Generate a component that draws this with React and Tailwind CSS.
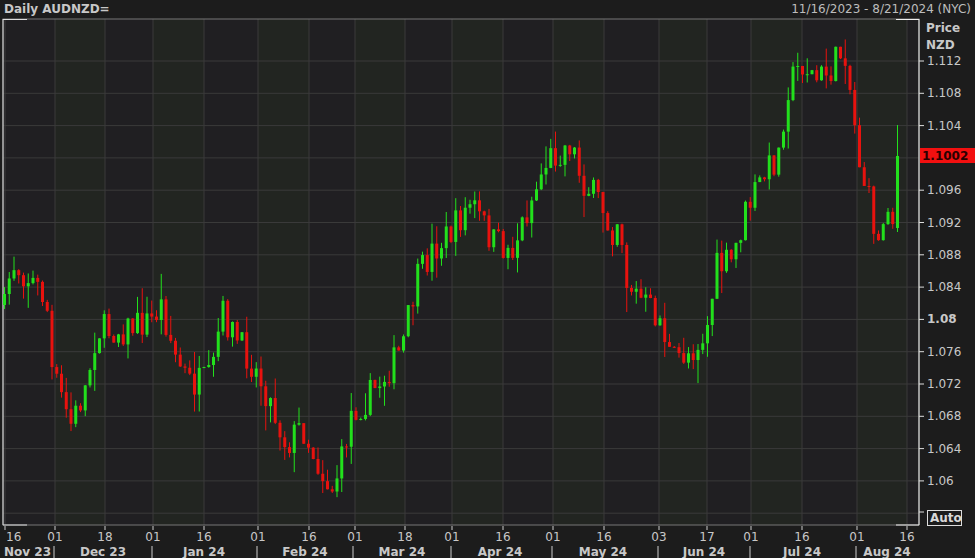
import React from 'react';

const Y = (p) => 61 + ((1.112 - p) / 0.004) * 32.3;

const path = [[3,310],[10,262],[30,280],[45,300],[50,370],[70,425],[85,385],[95,330],[120,330],[150,320],[160,305],[175,360],[190,385],[210,380],[220,312],[235,340],[250,362],[265,392],[285,445],[300,425],[320,472],[330,490],[340,462],[350,412],[365,400],[380,380],[400,350],[415,282],[430,252],[450,232],[470,202],[490,240],[510,252],[530,200],[545,160],[560,150],[570,142],[580,180],[600,205],[610,232],[618,212],[625,282],[640,300],[660,322],[670,362],[690,350],[705,332],[715,268],[730,262],[745,210],[760,180],[778,152],[785,90],[800,62],[815,80],[830,70],[843,45],[850,100],[858,160],[870,212],[878,250],[885,192],[893,228]];

const interp = (x) => {
  for (let i = 1; i < path.length; i++) {
    if (x <= path[i][0]) {
      const [x0, y0] = path[i - 1], [x1, y1] = path[i];
      return y0 + ((x - x0) / (x1 - x0)) * (y1 - y0);
    }
  }
  return path[path.length - 1][1];
};

let seed = 7;
const rnd = () => { seed = (seed * 16807) % 2147483647; return seed / 2147483647; };

const candles = [];
let prev = 305;
for (let x = 3; x <= 893; x += 4.75) {
  const c = interp(x) + (rnd() - 0.5) * 32;
  const o = prev;
  const hi = Math.min(o, c) - rnd() * rnd() * 26;
  const lo = Math.max(o, c) + rnd() * rnd() * 26;
  candles.push({ x, o, c, hi, lo });
  prev = c;
}
candles.push({ x: 896, o: 228, c: 156, hi: 125, lo: 232 });

const prices = [1.112, 1.108, 1.104, 1.1, 1.096, 1.092, 1.088, 1.084, 1.08, 1.076, 1.072, 1.068, 1.064, 1.06, 1.056];
const days = [[5,'16'],[55,'01'],[105,'18'],[153,'01'],[204,'16'],[258,'01'],[309,'16'],[355,'01'],[405,'18'],[452,'01'],[503,'16'],[553,'01'],[604,'16'],[659,'03'],[707,'17'],[751,'01'],[802,'16'],[857,'01'],[907,'16']];
const months = [[28,'Nov 23'],[103,'Dec 23'],[204,'Jan 24'],[305,'Feb 24'],[402,'Mar 24'],[500,'Apr 24'],[603,'May 24'],[704,'Jun 24'],[802,'Jul 24'],[887,'Aug 24']];
const seps = [54, 152, 257, 353, 451, 552, 658, 750, 856];

export default function App() {
  return (
    <div className="w-[975px] h-[558px] bg-[#1c1c1c] overflow-hidden" style={{ fontFamily: 'Tahoma, "DejaVu Sans", sans-serif' }}>
      <div className="h-[18px] flex justify-between items-center px-1 text-[12px]">
        <span className="font-bold text-[#c8c8c8]">Daily AUDNZD=</span>
        <span className="text-[#bdbdbd]">11/16/2023 - 8/21/2024 (NYC)</span>
      </div>
      <svg width="975" height="540" viewBox="0 18 975 540" className="block">
        <rect x="3" y="19" width="916" height="506" fill="#201f22" />
        {days.slice(0, -1).map(([x], i) => i % 2 === 1 && (
          <rect key={'b' + i} x={x} y="19" width={days[i + 1][0] - x} height="506" fill="#222521" />
        ))}
        {prices.map((p) => (
          <line key={p} x1="3" x2="919" y1={Y(p)} y2={Y(p)} stroke="#3a3a3a" strokeWidth="1" />
        ))}
        {days.map(([x], i) => (
          <line key={'v' + i} x1={x} x2={x} y1="19" y2="525" stroke="#3a3a3a" strokeWidth="1" />
        ))}
        <rect x="3" y="19" width="916" height="506" fill="none" stroke="#777" strokeWidth="1" />
        <line x1="3" x2="3" y1="19" y2="525" stroke="#ddd" />
        <line x1="3" x2="27" y1="19.5" y2="19.5" stroke="#ddd" />
        <line x1="3" x2="27" y1="525" y2="525" stroke="#ddd" />
        <line x1="919" x2="919" y1="19" y2="525" stroke="#eee" />
        <line x1="896" x2="919" y1="19.5" y2="19.5" stroke="#eee" />
        <line x1="896" x2="919" y1="525" y2="525" stroke="#eee" />
        {candles.map((k, i) => {
          const col = k.c <= k.o ? '#22e01c' : '#e8120e';
          const top = Math.min(k.o, k.c), h = Math.max(Math.abs(k.c - k.o), 1);
          return (
            <g key={i}>
              <line x1={k.x + 1.5} x2={k.x + 1.5} y1={k.hi} y2={k.lo} stroke={col} strokeWidth="1" />
              <rect x={k.x} y={top} width="3" height={h} fill={col} />
            </g>
          );
        })}
        <text x="926" y="32" fill="#c8c8c8" fontSize="12" fontWeight="bold">Price</text>
        <text x="926" y="49" fill="#c8c8c8" fontSize="12" fontWeight="bold">NZD</text>
        {prices.slice(0, 14).map((p) => p !== 1.1 && (
          <g key={'l' + p}>
            <line x1="919" x2="924" y1={Y(p)} y2={Y(p)} stroke="#ddd" />
            <text x="927" y={Y(p) + 4} fill="#c8c8c8" fontSize="12" fontWeight={p === 1.08 ? 'bold' : 'normal'}>
              {p === 1.08 ? '1.08' : p === 1.06 ? '1.06' : p.toFixed(3)}
            </text>
          </g>
        ))}
        <rect x="920" y="148" width="55" height="15" fill="#f21010" />
        <text x="922" y="160" fill="#2a0000" fontSize="12" fontWeight="bold">1.1002</text>
        <line x1="919" x2="924" y1="512" y2="512" stroke="#ddd" />
        <rect x="927.5" y="510.5" width="34" height="15" fill="none" stroke="#ddd" />
        <text x="930" y="522" fill="#d8d8d8" fontSize="12" fontWeight="bold">Auto</text>
        {days.map(([x, d], i) => (
          <g key={'d' + i}>
            <line x1={x} x2={x} y1="526" y2="530" stroke="#ccc" />
            <text x={i === 0 ? 6 : x} y="541" fill="#c8c8c8" fontSize="12" textAnchor={i === 0 ? 'start' : 'middle'}>{d}</text>
          </g>
        ))}
        {seps.map((x) => (
          <line key={'s' + x} x1={x} x2={x} y1="546" y2="558" stroke="#ccc" />
        ))}
        {months.map(([x, m], i) => (
          <text key={m} x={i === 0 ? 4 : x} y="556" fill="#c8c8c8" fontSize="12" fontWeight="bold" textAnchor={i === 0 ? 'start' : 'middle'}>{m}</text>
        ))}
      </svg>
    </div>
  );
}
